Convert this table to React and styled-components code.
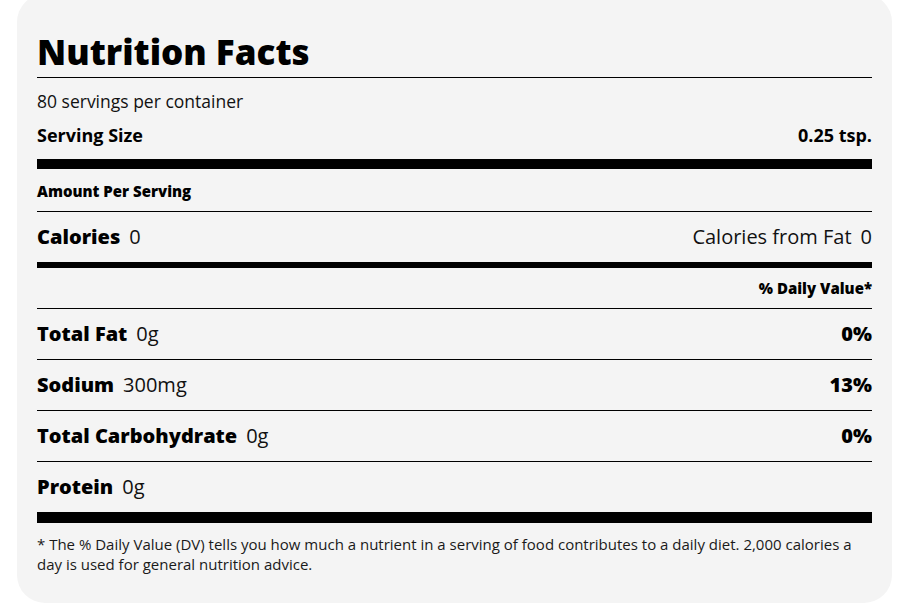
import React from "react";
import styled, { createGlobalStyle } from "styled-components";

const Global = createGlobalStyle`
  html, body { margin: 0; padding: 0; background: #ffffff; }
  body { font-family: "Open Sans", "Noto Sans", sans-serif; color: #000; }
  * { box-sizing: border-box; }
`;

const Card = styled.section`
  margin: -6px 0 0 17px;
  width: 875px;
  background: #f4f4f4;
  border-radius: 28px;
  padding: 39px 20px 29px 20px;
`;

const Title = styled.h1`
  margin: 0;
  font-size: 35px;
  line-height: 38px;
  font-weight: 800;
  padding-bottom: 6px;
  border-bottom: 1px solid #000;
`;

const Servings = styled.div`
  margin-top: 11px;
  font-size: 17.5px;
  line-height: 24px;
  color: #111;
`;

const Row = styled.div`
  display: flex;
  justify-content: space-between;
  align-items: baseline;
  font-size: ${(p) => p.$size || 20}px;
  line-height: ${(p) => p.$lh || 28}px;
  padding: ${(p) => p.$pad || "11px 0 11px"};
  border-bottom: ${(p) => (p.$line ? "1px solid #000" : "none")};
`;

const Bar = styled.div`
  height: ${(p) => p.$h}px;
  background: #000;
`;

const Label = styled.span`
  font-weight: ${(p) => p.$w || 800};
`;

const Value = styled.span`
  font-weight: 400;
  margin-left: 9px;
  color: #111;
`;

const Plain = styled.span`
  font-weight: 400;
  color: #111;
`;

const Foot = styled.p`
  margin: 11px 0 0;
  font-size: 15px;
  line-height: 20px;
  color: #1a1a1a;
`;

const nutrients = [
  { name: "Total Fat", amount: "0g", dv: "0%" },
  { name: "Sodium", amount: "300mg", dv: "13%" },
  { name: "Total Carbohydrate", amount: "0g", dv: "0%" },
  { name: "Protein", amount: "0g", dv: "" },
];

export default function App() {
  return (
    <>
      <Global />
      <Card>
        <Title>Nutrition Facts</Title>
        <Servings>80 servings per container</Servings>
        <Row $size={18} $lh={27} $pad="9px 0 10px">
          <Label $w={700}>Serving Size</Label>
          <Label $w={700}>0.25 tsp.</Label>
        </Row>
        <Bar $h={10} />
        <Row $size={15} $lh={21} $pad="12px 0 9px" $line>
          <Label>Amount Per Serving</Label>
        </Row>
        <Row>
          <span>
            <Label>Calories</Label>
            <Value>0</Value>
          </span>
          <span>
            <Plain>Calories from Fat</Plain>
            <Value>0</Value>
          </span>
        </Row>
        <Bar $h={6} />
        <Row $size={15} $lh={20} $pad="10px 0 10px" $line>
          <span />
          <Label>% Daily Value*</Label>
        </Row>
        {nutrients.map((n) => (
          <Row key={n.name} $line>
            <span>
              <Label>{n.name}</Label>
              <Value>{n.amount}</Value>
            </span>
            <Label>{n.dv}</Label>
          </Row>
        ))}
        <Bar $h={10} />
        <Foot>
          * The % Daily Value (DV) tells you how much a nutrient in a serving of food contributes to a daily diet. 2,000 calories a day is used for general nutrition advice.
        </Foot>
      </Card>
    </>
  );
}
